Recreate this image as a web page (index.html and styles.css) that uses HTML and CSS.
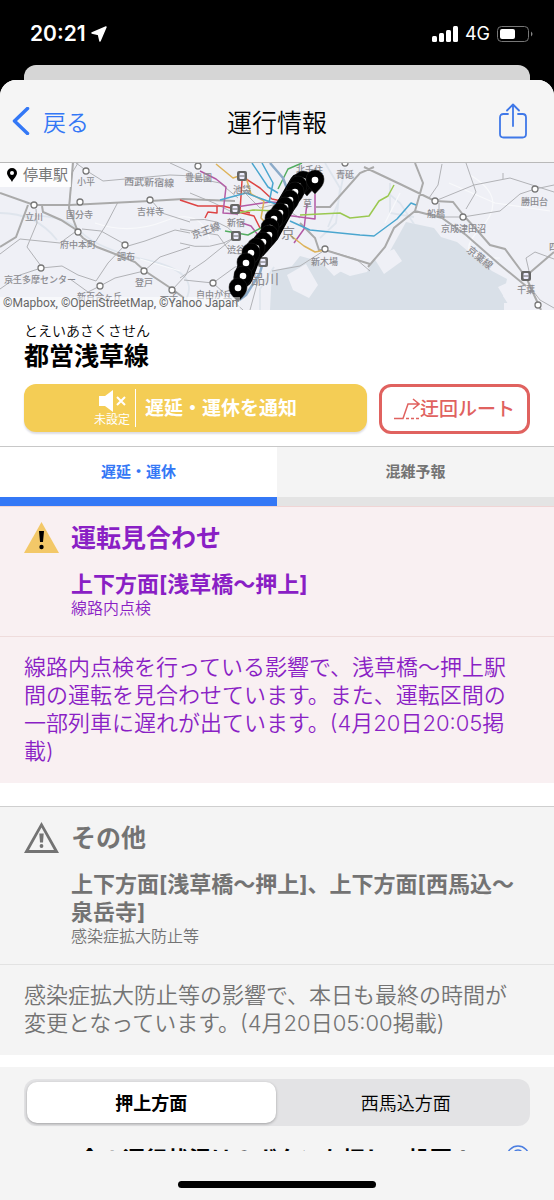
FILE: index.html
```html
<!DOCTYPE html>
<html lang="ja">
<head>
<meta charset="utf-8">
<meta name="viewport" content="width=device-width, initial-scale=1">
<title>運行情報</title>
<link rel="stylesheet" href="styles.css">
</head>
<body>
<div class="status">
  <div class="status-side">
    <span class="clock">20:21</span>
    <svg width="16" height="16" viewBox="0 0 16 16"><path d="M15 1 9 15 7.500 8.500 1 7Z" fill="#fff" stroke="#fff" stroke-width="1.500" stroke-linejoin="round"/></svg>
  </div>
  <div class="status-side status-right">
    <svg width="26" height="16" viewBox="0 0 26 16" fill="#fff"><rect y="10" width="5" height="6" rx="1.500"/><rect x="7" y="7" width="5" height="9" rx="1.500"/><rect x="14" y="4" width="5" height="12" rx="1.500"/><rect x="21" width="5" height="16" rx="1.500"/></svg>
    <span class="network">4G</span>
    <svg width="36" height="16" viewBox="0 0 36 16"><rect x=".5" y=".5" width="31" height="15" rx="4" fill="none" stroke="#777"/><rect x="3" y="3" width="15" height="10" rx="2" fill="#fff"/><path d="M34 5.500q3 2.500 0 5Z" fill="#888"/></svg>
  </div>
</div>
<div class="under-sheet"></div>
<main class="sheet">
  <header class="nav">
    <button class="back"><svg width="18" height="28" viewBox="0 0 18 28"><path d="M15.500 1.500 2.500 14l13 12.500" fill="none" stroke="#3478f6" stroke-width="3.500" stroke-linecap="round" stroke-linejoin="round"/></svg><span>戻る</span></button>
    <h1 class="title">運行情報</h1>
    <button class="share" aria-label="共有"><svg width="28" height="36" viewBox="0 0 28 36" fill="none" stroke="#3f78e8" stroke-width="1.800" stroke-linecap="round" stroke-linejoin="round"><path d="M9 11H4.500Q1 11 1 14.500V31Q1 34.500 4.500 34.500H23.500Q27 34.500 27 31V14.500Q27 11 23.500 11H19M14 23V1.500M8 7.500l6-6 6 6"/></svg></button>
  </header>

  <div class="map">
    <svg class="map-art" viewBox="0 0 554 147" preserveAspectRatio="xMidYMid slice">
      <defs>
        <g id="stop"><circle r="3" fill="#fff" stroke="#777" stroke-width="1.300"/></g>
        <g id="hub"><rect x="-5" y="-5" width="10" height="10" rx="2" fill="#666"/><rect x="-2.500" y="-3" width="5" height="6" rx="1" fill="#eef"/><path d="M-2.500 0H2.500" stroke="#666"/></g>
        <g id="pin"><path d="M0 14C-4 9-9 6-9-1A9 9 0 0 1 9-1C9 6 4 9 0 14Z" fill="#000" stroke="#222" stroke-width=".5"/><circle r="3.300" fill="#fff"/></g>
      </defs>
      <rect width="554" height="147" fill="#eff0f6"/>
      <path d="M272 108 292 103 300 93 318 98 335 106 350 113 367 109 374 96 390 88 400 70 406 59 420 62 434 65 441 74 457 79 475 94 492 108 507 116 503 133 512 147H270Z" fill="#d9e0e8"/>
      <g fill="#eff0f6"><path d="M287 112 306 101 318 122 309 135 293 127ZM320 98 333 89 346 105 334 113ZM374 95 394 86 402 98 384 111ZM498 124 509 119 512 129 504 134ZM504 140h14v7h-14Z"/></g>
      <g fill="none" stroke="#dfe5ed" stroke-width="1.800">
        <path d="M0 50Q36 50 57 77M20 53Q63 50 80 68T150 98T184 140M325 0 340 25 336 60 320 75M345 5 338 40 328 64M388 30 400 40 414 61M390 20V50L414 54M260 147V126L274 104"/>
      </g>
      <g fill="none" stroke="#f8f9fb" stroke-width="1.200"><path d="M95 60Q130 72 165 58T210 76M140 96 180 108M470 12Q510 35 480 66T500 95M400 30 385 60M449 20 495 40 550 48"/></g>
      <g fill="none" stroke="#b1b2b6" stroke-width="1">
        <path d="M76 0 87 8 103 18 170 12 195 13M170 0 192 10M69 47 72 10 78 0M36 46 37 60 27 84 41 103M0 91 20 76 60 80 75 69M0 126 20 112 41 105 62 103 78 112 96 118 108 100 125 82M70 116 88 129 100 123 115 115 144 108M82 66 101 68 128 83 145 78 175 67 190 70M152 38 162 50 190 59M118 39 106 62 96 78M144 108 160 94 190 84M172 127 186 112 190 102M190 14 220 20 238 35M190 30 214 40 238 52M190 57Q220 53 237 73M180 80Q210 90 238 73M180 115 205 98 236 73M184 117 213 120 235 104 263 99M213 120 243 147M180 66 218 72 231 90 251 92M250 147 263 99M272 108 300 103 325 87 356 96 370 108M435 38 474 22 510 15 554 29M442 1 438 22 429 35M466 0 476 29 466 46M463 54 500 48 520 31 535 26 554 22M529 108 526 95 535 89 554 96M530 124 540 137 554 145M439 40V54H464M240 25 260 45 277 41 300 55M503 16V10"/>
      </g>
      <g fill="none" stroke="#aaa" stroke-width="2">
        <path d="M0 30 34 42 70 42 150 38 183 36 235 38M78 69 69 45 73 0M28 42 16 74 0 84M42 43 43 49 61 57 75 66 83 75 97 84 110 89 135 99 145 108 172 126 184 135M364 4 400 21 435 38M415 0 423 20 415 48 442 55 466 72 499 101 526 123M415 48 394 65 385 84 368 104M464 53 476 66 490 82 505 86 525 113M435 38 453 39 464 53M526 113 554 89M526 114 535 134 541 147M300 60 315 75 319 87 325 87M325 87 370 101M316 44H330L360 10 374 4"/>
      </g>
      <g fill="none" stroke-width="1.500" stroke-linejoin="round">
        <path stroke="#d44" d="M180 37 198 43 223 43 250 50M205 55 208 49 217 50V43M243 14 260 25 272 36 286 39M234 48 254 53 260 65 275 72M242 18 240 48"/>
        <path stroke="#b35aa5" d="M200 8 216 16 226 24 223 50 238 51M236 44 270 39 290 40M242 60 251 63 258 72M294 80 304 66 307 40M315 31V56L285 52"/>
        <path stroke="#ddb35b" d="M216 1 233 15 245 11 251 31 264 38 261 55 270 64M290 72 304 83 315 89 325 87"/>
        <path stroke="#4aa6cf" d="M220 37 246 30 262 36 276 41M252 0 268 24 278 30M262 0 273 20 269 40M290 58 310 67 360 72 374 73 397 56 411 40 416 42"/>
        <path stroke="#9ac850" d="M238 50 253 47 277 48M300 52 340 50 350 55 369 53 379 38 388 33 394 22"/>
        <path stroke="#54ad61" d="M225 68 248 72 270 60M278 26 288 6 302 0"/>
        <path stroke="#8cabc9" stroke-width="2.500" d="M270 0 283 15 289 31M264 95 260 110 246 132 238 138"/>
      </g>
      <g class="map-labels">
        <text x="77" y="22">小平</text><text class="wide" x="124" y="22" transform="rotate(2 124 22)">西武新宿線</text><text x="25" y="57">立川</text><text x="66" y="55">国分寺</text><text x="137" y="52">吉祥寺</text><text x="60" y="85">府中本町</text><text x="117" y="97">調布</text><text x="135" y="123">登戸</text><text x="4" y="120">京王多摩センター</text><text x="77" y="137">新百合ヶ丘</text><text x="160" y="137">一子</text>
        <text x="185" y="18">豊島園</text><text x="233" y="30">池袋</text><text x="227" y="63">新宿</text><text class="wide" x="193" y="76" transform="rotate(-20 193 76)">京王線</text><text x="227" y="90">渋谷</text><text x="196" y="135">自由が丘</text><text class="city" x="251" y="121">品川</text><text class="city" x="281" y="75">京</text><text x="296" y="10">北千住</text><text x="303" y="44">草</text><text x="336" y="15">青砥</text><text x="311" y="102">新木場</text>
        <text x="427" y="54">船橋</text><text x="441" y="69">京成津田沼</text><text x="521" y="42">勝田台</text><text class="wide" x="466" y="88" transform="rotate(39 466 88)">京葉線</text><text x="517" y="130">千葉</text><text x="549" y="87">四</text>
      </g>
      <g>
        <use href="#stop" x="86" y="8"/><use href="#stop" x="34" y="42"/><use href="#stop" x="80" y="39"/><use href="#stop" x="150" y="37"/><use href="#stop" x="78" y="69"/><use href="#stop" x="125" y="82"/><use href="#stop" x="144" y="108"/><use href="#stop" x="41" y="105"/><use href="#stop" x="100" y="123"/><use href="#stop" x="172" y="127"/><use href="#stop" x="198" y="3"/><use href="#stop" x="213" y="120"/><use href="#stop" x="325" y="86"/><use href="#stop" x="345" y="0"/><use href="#stop" x="435" y="38"/><use href="#stop" x="463" y="54"/><use href="#stop" x="535" y="26"/><use href="#stop" x="538" y="142"/>
        <use href="#hub" x="242" y="13"/><use href="#hub" x="235" y="46"/><use href="#hub" x="236" y="73"/><use href="#hub" x="263" y="99"/><use href="#hub" x="526" y="113"/>
      </g>
      <path d="M243 115 252 91 270 71 282 49 299 20" fill="none" stroke="#000" stroke-width="19" stroke-linecap="round" stroke-linejoin="round"/>
      <g>
        <use href="#pin" x="307" y="19"/><use href="#pin" x="303" y="18"/><use href="#pin" x="298" y="23"/><use href="#pin" x="295" y="29"/><use href="#pin" x="290" y="37"/><use href="#pin" x="285" y="44"/><use href="#pin" x="280" y="50"/><use href="#pin" x="274" y="56"/><use href="#pin" x="270" y="65"/><use href="#pin" x="269" y="72"/><use href="#pin" x="263" y="79"/><use href="#pin" x="256" y="85"/><use href="#pin" x="251" y="90"/><use href="#pin" x="246" y="100"/><use href="#pin" x="243" y="113"/><use href="#pin" x="238" y="125"/><use href="#pin" x="315" y="17"/>
      </g>
    </svg>
    <div class="map-key"><svg width="10" height="14" viewBox="0 0 10 14"><path fill-rule="evenodd" d="M5 14C3 10 0 8 0 5a5 5 0 0 1 10 0c0 3-3 5-5 9ZM5 3a2 2 0 1 0 0 4 2 2 0 0 0 0-4Z"/></svg>停車駅</div>
    <div class="credits">©Mapbox, ©OpenStreetMap, ©Yahoo Japan</div>
  </div>

  <section class="line">
    <p class="kana">とえいあさくさせん</p>
    <h2 class="line-name">都営浅草線</h2>
    <div class="actions">
      <button class="notify">
        <span class="mute"><svg width="28" height="24" viewBox="0 0 28 24"><path d="M1 7h6l8-6v22l-8-6H1Z" fill="#fff"/><path d="m19 8 8 8m0-8-8 8" stroke="#fff" stroke-width="2"/></svg><small>未設定</small></span>
        <span class="notify-text">遅延・運休を通知</span>
      </button>
      <button class="detour"><svg width="26" height="22" viewBox="0 0 26 22" fill="none" stroke="#e0625f" stroke-width="1.500"><path d="M0 20.500H9L14 6H25M19 1l6 5-6 5"/><path d="M12 20.500H26" stroke-dasharray="3 2"/></svg><span>迂回ルート</span></button>
    </div>
  </section>

  <div class="tabs">
    <button class="tab tab-on">遅延・運休</button>
    <button class="tab">混雑予報</button>
  </div>

  <article class="notice notice-stop">
    <div class="notice-top">
      <svg class="notice-icon" width="35" height="31" viewBox="0 0 35 31"><path d="M17.500 0 35 31H0Z" fill="#f3c868"/><path d="M15 9h5l-1 11h-3Z"/><circle cx="17.500" cy="25" r="2.200"/></svg>
      <div>
        <h3 class="notice-title">運転見合わせ</h3>
        <h4 class="notice-area">上下方面[浅草橋〜押上]</h4>
        <p class="reason">線路内点検</p>
      </div>
    </div>
    <p class="notice-body">線路内点検を行っている影響で、浅草橋〜押上駅間の運転を見合わせています。また、運転区間の一部列車に遅れが出ています。(4月20日20:05掲載)</p>
  </article>

  <article class="notice notice-other">
    <div class="notice-top">
      <svg class="notice-icon" width="35" height="31" viewBox="0 0 35 31" fill="#737373"><path fill-rule="evenodd" d="M17.500 0 35 31H0ZM17.500 5.500 5 28H30Z"/><path d="M15.300 11.500h4.400l-.7 9h-3Z"/><circle cx="17.500" cy="24" r="1.900"/></svg>
      <div>
        <h3 class="notice-title">その他</h3>
        <h4 class="notice-area">上下方面[浅草橋〜押上]、上下方面[西馬込〜泉岳寺]</h4>
        <p class="reason">感染症拡大防止等</p>
      </div>
    </div>
    <p class="notice-body">感染症拡大防止等の影響で、本日も最終の時間が変更となっています。(4月20日05:00掲載)</p>
  </article>

  <section class="vote">
    <div class="segments">
      <button class="segment segment-on">押上方面</button>
      <button class="segment">西馬込方面</button>
    </div>
    <div class="prompt">
      <span>今の運行状況は？ボタンを押して投票！</span>
      <svg class="help" width="24" height="24" viewBox="0 0 24 24" fill="none" stroke="#4a7de0" stroke-width="1.500"><circle cx="12" cy="12" r="11"/><path d="M8 9Q8 5 12 5t4 4q0 2-4 5v2"/></svg>
    </div>
  </section>
  <div class="home-bar"></div>
</main>
</body>
</html>
```
FILE: styles.css
```css
* { box-sizing: border-box; }
body {
  margin: 0;
  min-height: 100vh;
  display: flex;
  flex-direction: column;
  background: #000;
  color: #000;
  font-family: Inter, "Noto Sans CJK JP", sans-serif;
  font-weight: 350;
}
h1, h2, h3, h4, p { margin: 0; }
button {
  border: 0;
  padding: 0;
  background: none;
  color: inherit;
  font: inherit;
}
svg { display: block; flex: none; }

.status {
  height: 65px;
  padding: 2px 21px 0 30px;
  display: flex;
  align-items: center;
  justify-content: space-between;
  color: #fff;
}
.status-side { display: flex; align-items: center; gap: 5px; }
.status-right { gap: 7px; }
.clock { font-size: 21px; font-weight: 600; }
.network { font-size: 18px; font-weight: 400; }

.under-sheet {
  height: 15px;
  margin: 0 24px;
  border-radius: 12px 12px 0 0;
  background: #d6d6d6;
}
.sheet {
  flex: 1;
  display: flex;
  flex-direction: column;
  border-radius: 16px 16px 0 0;
  overflow: hidden;
  background: #fff;
}
.nav {
  height: 83px;
  padding: 0 27px 0 12px;
  display: grid;
  grid-template-columns: 1fr auto 1fr;
  align-items: center;
  background: #f5f5f5;
  border-bottom: 1px solid #b9b9b9;
}
.back {
  display: flex;
  align-items: center;
  gap: 13px;
  color: #3478f6;
  font-size: 23px;
}
.title { padding-left: 15px; font-size: 25px; font-weight: 350; }
.share { justify-self: end; }

.map { position: relative; }
.map-art { width: 100%; height: 147px; }
.map-labels { font-size: 9px; font-weight: 500; fill: #8b8b90; }
.map-labels .wide { font-size: 10px; }
.map-labels .city { font-size: 14px; font-weight: 400; }
.map-key {
  position: absolute;
  top: 0;
  left: 0;
  padding: 0 3px 0 7px;
  display: flex;
  align-items: center;
  gap: 6px;
  background: rgba(255, 255, 255, .85);
  color: #777;
  font-size: 15px;
  font-weight: 400;
  line-height: 24px;
}
.map-key svg { fill: #000; }
.credits {
  position: absolute;
  left: 0;
  bottom: 0;
  padding: 0 2px 0 3px;
  background: rgba(255, 255, 255, .5);
  color: #666;
  font-family: Roboto, sans-serif;
  font-size: 12px;
  font-weight: 400;
  line-height: 13px;
}

.line { padding: 12px 24px; }
.kana { font-size: 14px; line-height: 18px; }
.line-name { font-size: 25px; font-weight: 700; line-height: 32px; }
.actions { margin-top: 12px; display: flex; gap: 12px; }
.notify {
  flex: 1;
  height: 48px;
  display: flex;
  align-items: center;
  justify-content: center;
  border-radius: 12px;
  background: #f4cd55;
  box-shadow: 0 2px 2px #dddde4;
  color: #fff;
}
.mute {
  height: 38px;
  padding-right: 5px;
  display: flex;
  flex-direction: column;
  align-items: center;
  border-right: 1px solid #fff;
}
.mute small { font-size: 12px; font-weight: 400; line-height: 14px; }
.notify-text { padding: 0 0 4px 9px; font-size: 19px; font-weight: 700; }
.detour {
  width: 151px;
  height: 50px;
  display: flex;
  align-items: center;
  justify-content: center;
  border: 3px solid #e0625f;
  border-radius: 12px;
  color: #e0625f;
  font-size: 19px;
  font-weight: 500;
}
.detour span { padding-bottom: 3px; }

.tabs { display: flex; border-top: 1px solid #c8c8c8; }
.tab {
  flex: 1;
  height: 59px;
  padding-bottom: 3px;
  border-bottom: 9px solid #e4e4e4;
  background: #f4f4f4;
  color: #737373;
  font-size: 15px;
  font-weight: 700;
}
.tab-on { border-color: #3478f6; background: #fff; color: #3478f6; }

.notice { border-top: 1px solid; }
.notice-stop { background: #f9f0f2; border-color: #f0d5d5; color: #8a1fc5; }
.notice-other {
  margin-top: 23px;
  background: #f4f4f4;
  border-color: #cfcfcf;
  color: #737373;
}
.notice-top {
  padding: 13px 24px 18px;
  display: flex;
  gap: 12px;
  border-bottom: 1px solid #e2e2e2;
}
.notice-stop .notice-top { border-color: #efdcdc; }
.notice-icon { margin-top: 2px; }
.notice-title { font-size: 25px; font-weight: 700; line-height: 36px; }
.notice-area { margin-top: 14px; font-size: 22px; font-weight: 700; line-height: 28px; }
.reason { font-size: 16px; line-height: 20px; }
.notice-body { padding: 16px 28px 18px 24px; font-size: 22px; line-height: 28px; }

.vote { flex: 1; margin-top: 12px; padding: 12px 24px 0; background: #f4f4f4; }
.segments {
  height: 47px;
  padding: 3px 0 3px 3px;
  display: flex;
  gap: 6px;
  border-radius: 12px;
  background: #e3e3e5;
}
.segment { flex: 1; padding-bottom: 2px; border-radius: 10px; font-size: 18px; }
.segment-on {
  background: #fff;
  box-shadow: 0 1px 3px rgba(0, 0, 0, .3);
  font-weight: 700;
}
.prompt {
  height: 7px;
  margin-top: 18px;
  display: flex;
  justify-content: flex-end;
  gap: 32px;
  overflow: hidden;
  font-size: 22px;
  font-weight: 700;
  line-height: 30px;
}
.help { margin-top: 1px; }
.home-bar {
  width: 100%;
  padding: 0 178px 12px;
  background: #f4f4f4;
}
.home-bar::before {
  content: "";
  display: block;
  height: 7px;
  border-radius: 4px;
  background: #000;
}
```
